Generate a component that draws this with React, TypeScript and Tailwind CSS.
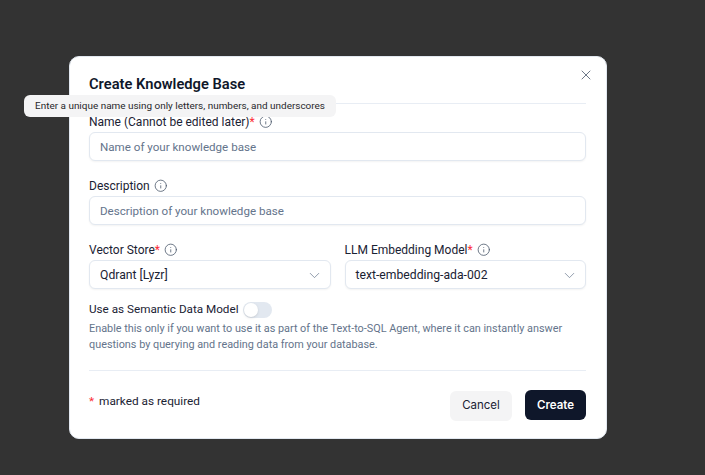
import { ChevronDown, Info, X } from 'lucide-react';

function FieldLabel({ text, required }: { text: string; required?: boolean }) {
  return (
    <div className="flex h-[16px] items-center gap-[4px] text-[12px] leading-4 text-[#1a2233]">
      <span>
        {text}
        {required && <span className="text-red-500">*</span>}
      </span>
      <Info className="h-[13.5px] w-[13.5px] text-[#475569]" strokeWidth={1.4} />
    </div>
  );
}

function TextField({ placeholder }: { placeholder: string }) {
  return (
    <div className="mt-[2px] flex h-[29px] items-center rounded-md border border-[#e2e8f0] bg-white px-[10px] pt-[2px] text-[11.6px] text-[#64748b] shadow-xs">
      {placeholder}
    </div>
  );
}

function SelectField({ value }: { value: string }) {
  return (
    <div className="mt-[2px] flex h-[29px] items-center justify-between rounded-md border border-[#e2e8f0] bg-white pt-[1px] pr-[7px] pl-[10px] text-[12.2px] text-[#1a2233] shadow-xs">
      <span>{value}</span>
      <ChevronDown className="h-[17px] w-[17px] text-[#64748b]" strokeWidth={1} />
    </div>
  );
}

export default function App() {
  return (
    <div className="relative h-[475px] w-[705px] overflow-hidden bg-[#333333] pt-[56px] pl-[69px] font-['Roboto',sans-serif]">
      <div className="relative h-[383px] w-[538px] rounded-[10px] border border-[#e2e8f0] bg-white pt-[19px] pr-[20px] pl-[19px]">
        <button className="absolute top-[10px] right-[12px] text-[#475569]">
          <X className="h-[16px] w-[16px]" strokeWidth={1.2} />
        </button>

        <h2 className="h-[16px] text-[14.7px] leading-4 font-semibold text-[#0f172a]">
          Create Knowledge Base
        </h2>
        <div className="mt-[11px] h-px bg-[#e8edf4]" />

        <div className="mt-[10px]">
          <FieldLabel text="Name (Cannot be edited later)" required />
          <TextField placeholder="Name of your knowledge base" />
        </div>

        <div className="mt-[17px]">
          <FieldLabel text="Description" />
          <TextField placeholder="Description of your knowledge base" />
        </div>

        <div className="mt-[17px] grid grid-cols-2 gap-[14px]">
          <div>
            <FieldLabel text="Vector Store" required />
            <SelectField value="Qdrant [Lyzr]" />
          </div>
          <div>
            <FieldLabel text="LLM Embedding Model" required />
            <SelectField value="text-embedding-ada-002" />
          </div>
        </div>

        <div className="mt-[13px] flex h-[16px] items-center gap-[5px] text-[11.7px] text-[#1a2233]">
          <span>Use as Semantic Data Model</span>
          <span className="flex h-[16px] w-[29px] items-center rounded-full bg-[#e2e8f0]">
            <span className="h-[14px] w-[14px] translate-x-px rounded-full bg-white shadow-sm" />
          </span>
        </div>
        <p className="mt-[3px] text-[10.85px] leading-[16px] text-[#64748b]">
          Enable this only if you want to use it as part of the Text-to-SQL Agent, where it can instantly answer
          <br />
          questions by querying and reading data from your database.
        </p>

        <div className="mt-[17px] h-px bg-[#e8edf4]" />

        <div className="mt-[19px] flex items-start justify-between">
          <div className="mt-[3px] flex items-center gap-[5px] text-[11.8px] text-[#1a2233]">
            <span className="text-red-500">*</span>
            <span>marked as required</span>
          </div>
          <div className="flex gap-[13px] font-['Inter',sans-serif]">
            <button className="mt-px h-[30px] w-[62px] rounded-md bg-[#f4f4f5] text-[11.5px] text-[#1a2233]">
              Cancel
            </button>
            <button className="h-[30px] w-[61px] rounded-md bg-[#0f172a] pt-px text-[11.5px] font-semibold text-white">
              Create
            </button>
          </div>
        </div>
      </div>

      {/* tooltip sits over the modal edge */}
      <div className="absolute top-[95px] left-[24px] flex h-[22px] w-[312px] items-center justify-center rounded-md bg-[#f4f4f5] text-[9.95px] text-[#27272a]">
        Enter a unique name using only letters, numbers, and underscores
      </div>
    </div>
  );
}
